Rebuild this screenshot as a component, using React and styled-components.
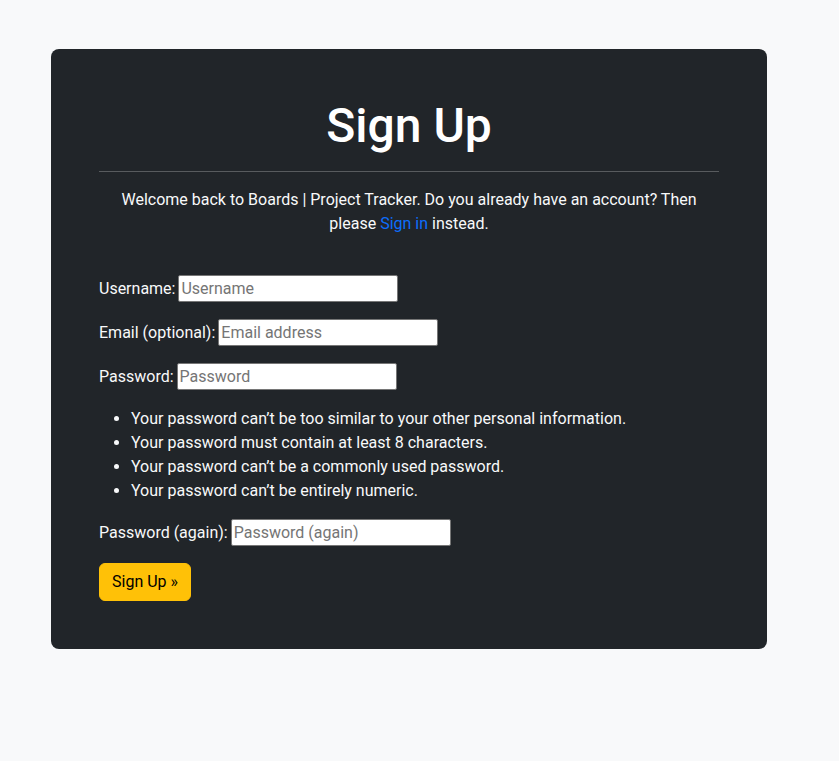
import styled, { createGlobalStyle } from "styled-components";

const GlobalStyle = createGlobalStyle`
  * { box-sizing: border-box; }
  body {
    margin: 0;
    background: #f8f9fa;
    font-family: Roboto, "Liberation Sans", sans-serif;
    font-size: 16px;
    line-height: 1.5;
    color: #212529;
  }
`;

const Page = styled.main`
  padding: 49px 0 0 51px;
  min-height: 761px;
`;

const Card = styled.section`
  width: 716px;
  padding: 48px;
  background: #212529;
  color: #f8f9fa;
  border-radius: 8px;
`;

const Title = styled.h1`
  margin: 0 0 7px;
  font-size: 48px;
  font-weight: 500;
  line-height: 1.2;
  text-align: center;
  color: #fff;
`;

const Rule = styled.hr`
  margin: 16px 0;
  border: 0;
  border-top: 1px solid #fff;
  opacity: 0.25;
`;

const Intro = styled.p`
  margin: 0 0 39px;
  padding: 0 20px;
  text-align: center;
`;

const Link = styled.a`
  color: #0d6efd;
  text-decoration: none;
`;

const Row = styled.p`
  margin: 0 0 16px;
  display: flex;
  align-items: center;
  height: 28px;
`;

const Label = styled.label`
  margin-right: 3px;
`;

const Input = styled.input`
  width: 220px;
  height: 27px;
  padding: 1px 2px;
  border: 1px solid #767676;
  border-radius: 2px;
  background: #fff;
  font: inherit;
  line-height: 1.5;
  color: #212529;
  &::placeholder { color: #757575; }
`;

const Rules = styled.ul`
  margin: 0 0 16px;
  padding-left: 32px;
`;

const Button = styled.button`
  padding: 6px 12px;
  border: 1px solid #ffc107;
  border-radius: 6px;
  background: #ffc107;
  color: #000;
  font: inherit;
  line-height: 1.5;
  cursor: pointer;
`;

const fields = [
  { id: "username", label: "Username:", placeholder: "Username", type: "text" },
  { id: "email", label: "Email (optional):", placeholder: "Email address", type: "email" },
  { id: "password1", label: "Password:", placeholder: "Password", type: "password" },
];

const hints = [
  "Your password can\u2019t be too similar to your other personal information.",
  "Your password must contain at least 8 characters.",
  "Your password can\u2019t be a commonly used password.",
  "Your password can\u2019t be entirely numeric.",
];

const App = () => {
  return (
    <>
      <GlobalStyle />
      <Page>
        <Card>
          <Title>Sign Up</Title>
          <Rule />
          <Intro>
            Welcome back to Boards | Project Tracker. Do you already have an account? Then
            please <Link href="#">Sign in</Link> instead.
          </Intro>
          <form onSubmit={(e) => e.preventDefault()}>
            {fields.map((f) => (
              <Row key={f.id}>
                <Label htmlFor={f.id}>{f.label}</Label>
                <Input id={f.id} type={f.type} placeholder={f.placeholder} />
              </Row>
            ))}
            <Rules>
              {hints.map((h) => (
                <li key={h}>{h}</li>
              ))}
            </Rules>
            <Row>
              <Label htmlFor="password2">Password (again):</Label>
              <Input id="password2" type="password" placeholder="Password (again)" />
            </Row>
            <Button type="submit">Sign Up &raquo;</Button>
          </form>
        </Card>
      </Page>
    </>
  );
};

export default App;
